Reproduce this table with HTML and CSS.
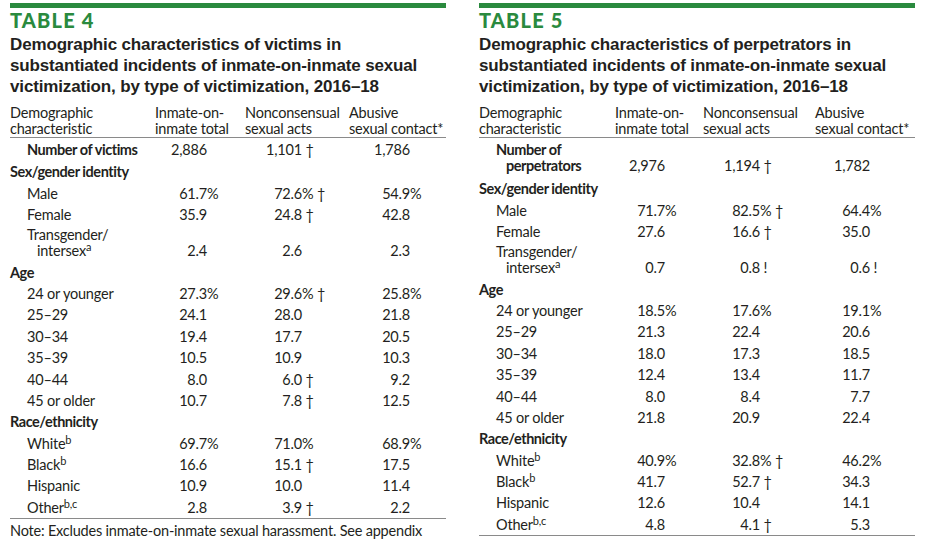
FILE: index.html
```html
<!DOCTYPE html>
<html lang="en">
<head>
<meta charset="utf-8">
<title>Tables 4 and 5</title>
<link rel="stylesheet" href="styles.css">
</head>
<body>
<div class="page">
  <section class="panel t4">
    <div class="bar"></div>
    <div class="tag">TABLE 4</div>
    <h1 class="title">Demographic characteristics of victims in substantiated incidents of inmate-on-inmate sexual victimization, by type of victimization, 2016–18</h1>
    <div class="tbl">
      <div class="hdr">
        <div>Demographic<br>characteristic</div>
        <div>Inmate-on-<br>inmate total</div>
        <div>Nonconsensual<br>sexual acts</div>
        <div>Abusive<br>sexual contact*</div>
      </div>
      <div class="row first">
        <div class="lbl sub b">Number of victims</div>
        <div class="c"><span class="n">2,886</span></div>
        <div class="c"><span class="n">1,101</span> †</div>
        <div class="c"><span class="n">1,786</span></div>
      </div>
      <div class="row"><div class="lbl b">Sex/gender identity</div></div>
      <div class="row sx">
        <div class="lbl sub">Male</div>
        <div class="c"><span class="n">61.7</span>%</div>
        <div class="c"><span class="n">72.6</span>% †</div>
        <div class="c"><span class="n">54.9</span>%</div>
      </div>
      <div class="row sx">
        <div class="lbl sub">Female</div>
        <div class="c"><span class="n">35.9</span></div>
        <div class="c"><span class="n">24.8</span> †</div>
        <div class="c"><span class="n">42.8</span></div>
      </div>
      <div class="row sx two">
        <div class="lbl sub hang">Transgender/<br>intersex<sup>a</sup></div>
        <div class="c"><span class="n">2.4</span></div>
        <div class="c"><span class="n">2.6</span></div>
        <div class="c"><span class="n">2.3</span></div>
      </div>
      <div class="row"><div class="lbl b">Age</div></div>
      <div class="row">
        <div class="lbl sub">24 or younger</div>
        <div class="c"><span class="n">27.3</span>%</div>
        <div class="c"><span class="n">29.6</span>% †</div>
        <div class="c"><span class="n">25.8</span>%</div>
      </div>
      <div class="row">
        <div class="lbl sub">25–29</div>
        <div class="c"><span class="n">24.1</span></div>
        <div class="c"><span class="n">28.0</span></div>
        <div class="c"><span class="n">21.8</span></div>
      </div>
      <div class="row">
        <div class="lbl sub">30–34</div>
        <div class="c"><span class="n">19.4</span></div>
        <div class="c"><span class="n">17.7</span></div>
        <div class="c"><span class="n">20.5</span></div>
      </div>
      <div class="row">
        <div class="lbl sub">35–39</div>
        <div class="c"><span class="n">10.5</span></div>
        <div class="c"><span class="n">10.9</span></div>
        <div class="c"><span class="n">10.3</span></div>
      </div>
      <div class="row">
        <div class="lbl sub">40–44</div>
        <div class="c"><span class="n">8.0</span></div>
        <div class="c"><span class="n">6.0</span> †</div>
        <div class="c"><span class="n">9.2</span></div>
      </div>
      <div class="row">
        <div class="lbl sub">45 or older</div>
        <div class="c"><span class="n">10.7</span></div>
        <div class="c"><span class="n">7.8</span> †</div>
        <div class="c"><span class="n">12.5</span></div>
      </div>
      <div class="row"><div class="lbl b">Race/ethnicity</div></div>
      <div class="row">
        <div class="lbl sub">White<sup>b</sup></div>
        <div class="c"><span class="n">69.7</span>%</div>
        <div class="c"><span class="n">71.0</span>%</div>
        <div class="c"><span class="n">68.9</span>%</div>
      </div>
      <div class="row">
        <div class="lbl sub">Black<sup>b</sup></div>
        <div class="c"><span class="n">16.6</span></div>
        <div class="c"><span class="n">15.1</span> †</div>
        <div class="c"><span class="n">17.5</span></div>
      </div>
      <div class="row">
        <div class="lbl sub">Hispanic</div>
        <div class="c"><span class="n">10.9</span></div>
        <div class="c"><span class="n">10.0</span></div>
        <div class="c"><span class="n">11.4</span></div>
      </div>
      <div class="row last">
        <div class="lbl sub">Other<sup>b,c</sup></div>
        <div class="c"><span class="n">2.8</span></div>
        <div class="c"><span class="n">3.9</span> †</div>
        <div class="c"><span class="n">2.2</span></div>
      </div>
    </div>
    <p class="note">Note: Excludes inmate-on-inmate sexual harassment. See appendix table 6 for standard errors.</p>
  </section>

  <section class="panel t5">
    <div class="bar"></div>
    <div class="tag">TABLE 5</div>
    <h1 class="title">Demographic characteristics of perpetrators in substantiated incidents of inmate-on-inmate sexual victimization, by type of victimization, 2016–18</h1>
    <div class="tbl">
      <div class="hdr">
        <div>Demographic<br>characteristic</div>
        <div>Inmate-on-<br>inmate total</div>
        <div>Nonconsensual<br>sexual acts</div>
        <div>Abusive<br>sexual contact*</div>
      </div>
      <div class="row first two">
        <div class="lbl sub b hang">Number of<br>perpetrators</div>
        <div class="c"><span class="n">2,976</span></div>
        <div class="c"><span class="n">1,194</span> †</div>
        <div class="c"><span class="n">1,782</span></div>
      </div>
      <div class="row"><div class="lbl b">Sex/gender identity</div></div>
      <div class="row sx">
        <div class="lbl sub">Male</div>
        <div class="c"><span class="n">71.7</span>%</div>
        <div class="c"><span class="n">82.5</span>% †</div>
        <div class="c"><span class="n">64.4</span>%</div>
      </div>
      <div class="row sx">
        <div class="lbl sub">Female</div>
        <div class="c"><span class="n">27.6</span></div>
        <div class="c"><span class="n">16.6</span> †</div>
        <div class="c"><span class="n">35.0</span></div>
      </div>
      <div class="row sx two">
        <div class="lbl sub hang">Transgender/<br>intersex<sup>a</sup></div>
        <div class="c"><span class="n">0.7</span></div>
        <div class="c"><span class="n">0.8</span> !</div>
        <div class="c"><span class="n">0.6</span> !</div>
      </div>
      <div class="row"><div class="lbl b">Age</div></div>
      <div class="row">
        <div class="lbl sub">24 or younger</div>
        <div class="c"><span class="n">18.5</span>%</div>
        <div class="c"><span class="n">17.6</span>%</div>
        <div class="c"><span class="n">19.1</span>%</div>
      </div>
      <div class="row">
        <div class="lbl sub">25–29</div>
        <div class="c"><span class="n">21.3</span></div>
        <div class="c"><span class="n">22.4</span></div>
        <div class="c"><span class="n">20.6</span></div>
      </div>
      <div class="row">
        <div class="lbl sub">30–34</div>
        <div class="c"><span class="n">18.0</span></div>
        <div class="c"><span class="n">17.3</span></div>
        <div class="c"><span class="n">18.5</span></div>
      </div>
      <div class="row">
        <div class="lbl sub">35–39</div>
        <div class="c"><span class="n">12.4</span></div>
        <div class="c"><span class="n">13.4</span></div>
        <div class="c"><span class="n">11.7</span></div>
      </div>
      <div class="row">
        <div class="lbl sub">40–44</div>
        <div class="c"><span class="n">8.0</span></div>
        <div class="c"><span class="n">8.4</span></div>
        <div class="c"><span class="n">7.7</span></div>
      </div>
      <div class="row">
        <div class="lbl sub">45 or older</div>
        <div class="c"><span class="n">21.8</span></div>
        <div class="c"><span class="n">20.9</span></div>
        <div class="c"><span class="n">22.4</span></div>
      </div>
      <div class="row"><div class="lbl b">Race/ethnicity</div></div>
      <div class="row">
        <div class="lbl sub">White<sup>b</sup></div>
        <div class="c"><span class="n">40.9</span>%</div>
        <div class="c"><span class="n">32.8</span>% †</div>
        <div class="c"><span class="n">46.2</span>%</div>
      </div>
      <div class="row">
        <div class="lbl sub">Black<sup>b</sup></div>
        <div class="c"><span class="n">41.7</span></div>
        <div class="c"><span class="n">52.7</span> †</div>
        <div class="c"><span class="n">34.3</span></div>
      </div>
      <div class="row">
        <div class="lbl sub">Hispanic</div>
        <div class="c"><span class="n">12.6</span></div>
        <div class="c"><span class="n">10.4</span></div>
        <div class="c"><span class="n">14.1</span></div>
      </div>
      <div class="row last">
        <div class="lbl sub">Other<sup>b,c</sup></div>
        <div class="c"><span class="n">4.8</span></div>
        <div class="c"><span class="n">4.1</span> †</div>
        <div class="c"><span class="n">5.3</span></div>
      </div>
    </div>
    <p class="note">Note: Excludes inmate-on-inmate sexual harassment. See appendix table 7 for standard errors.</p>
  </section>
</div>
</body>
</html>
```
FILE: styles.css
```css
html, body {
  margin: 0;
  padding: 0;
  background: #ffffff;
}
body {
  width: 925px;
  height: 539px;
  overflow: hidden;
  color: #231f20;
  font-family: Lato, "Liberation Sans", sans-serif;
  font-size: 14.5px;
  letter-spacing: -0.2px;
}
.page {
  display: flex;
  gap: 33px;
  padding-left: 10px;
}
.panel {
  width: 436px;
  flex: none;
}
.bar {
  height: 5px;
  margin-top: 3px;
  background: #2a8a3e;
}
.tag {
  margin-top: 2px;
  height: 20px;
  line-height: 20px;
  font-family: Lato, "Liberation Sans", sans-serif;
  font-weight: 900;
  font-size: 20px;
  letter-spacing: 1.2px;
  color: #2a8a3e;
}
.title {
  margin: 4px 0 0 0;
  font-family: "Liberation Sans", Arial, sans-serif;
  font-weight: 700;
  font-size: 17px;
  line-height: 21px;
  letter-spacing: -0.15px;
  color: #231f20;
}
.t4 .tbl { --cols: 145px 90px 104px 97px; --p2: 12px; --p3: 17px; --p4: 21px; }
.t5 .tbl { --cols: 136px 88px 112px 100px; --p2: 10px; --p3: 17px; --p4: 15px; }
.tbl {
  margin-top: 8px;
}
.hdr {
  display: grid;
  grid-template-columns: var(--cols);
  line-height: 16px;
  white-space: nowrap;
  border-bottom: 1px solid #8a8a8a;
}
.row {
  display: grid;
  grid-template-columns: var(--cols);
  line-height: 15px;
  padding: 3.2px 0;
  align-items: end;
}
.row.two {
  line-height: 16px;
  padding: 2.2px 0;
}
.row.first {
  padding-top: 4px;
  padding-bottom: 4px;
}
.row.last {
  border-bottom: 1px solid #8a8a8a;
  padding-bottom: 3px;
}
.lbl.sub { padding-left: 17px; }
.lbl.b { font-weight: 700; letter-spacing: -0.45px; }
.hang { padding-left: 27px !important; text-indent: -10px; }
.c { white-space: nowrap; }
.c:nth-child(2) { padding-left: var(--p2); }
.c:nth-child(3) { padding-left: var(--p3); }
.c:nth-child(4) { padding-left: var(--p4); }
.n {
  display: inline-block;
  width: 40px;
  text-align: right;
}
sup {
  font-size: 11px;
  line-height: 0;
  vertical-align: 5px;
}
.note {
  margin: 3px 0 0 0;
  line-height: 17px;
}
```
